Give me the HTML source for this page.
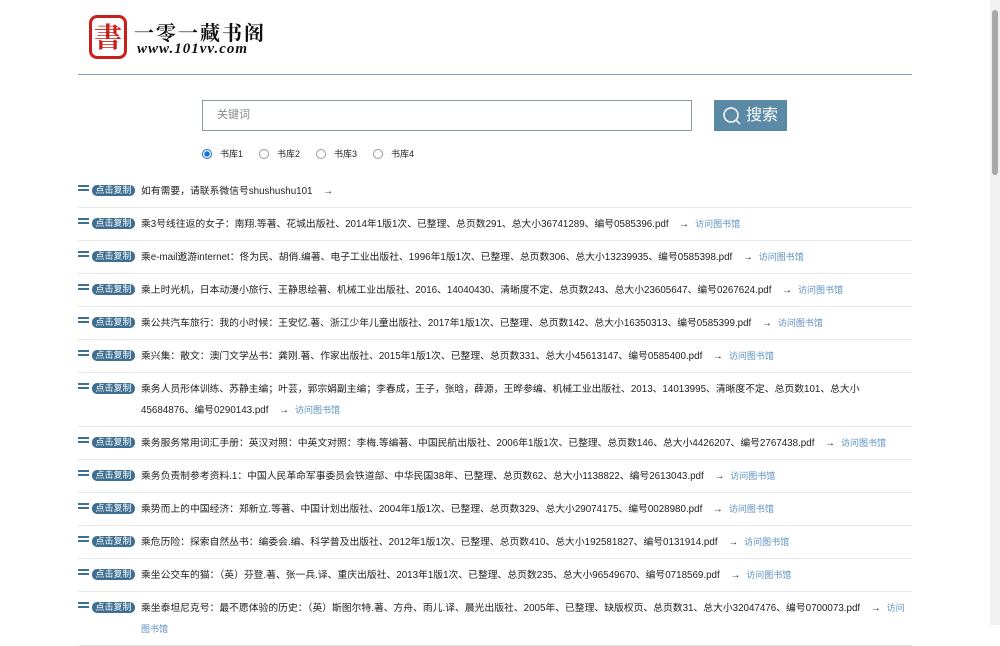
<!DOCTYPE html>
<html><head><meta charset="utf-8">
<style>
*{margin:0;padding:0;box-sizing:border-box}
body{width:1000px;height:625px;overflow:hidden;background:#fff;font-family:"Liberation Sans","Noto Sans CJK SC",sans-serif;color:#222;position:relative}
.logo{position:absolute;left:89px;top:15px;width:38px;height:44px;border:3px solid #c8201a;border-radius:8px;color:#c8201a;font:bold 28px "Noto Serif CJK SC",serif;text-align:center;line-height:36px}
.t1{position:absolute;left:134px;top:17px;font:bold 20px "Noto Serif CJK SC",serif;letter-spacing:2px;color:#111}
.t2{position:absolute;left:137px;top:41px;font:italic bold 15px "Liberation Serif",serif;letter-spacing:1px;color:#111}
.hr{position:absolute;left:78px;top:74px;width:834px;height:1px;background:#7fa3c4}
.inp{position:absolute;left:202px;top:100px;width:490px;height:31px;border:1px solid #8a9aa0;padding-left:14px;font-size:11px;color:#888;line-height:29px}
.btn{position:absolute;left:714px;top:100px;width:73px;height:31px;background:#5a8aa6;color:#fff;font-size:16px;line-height:31px;padding-left:32px}
.btn svg{position:absolute;left:8px;top:6px}
.radios{position:absolute;left:202px;top:147px;font-size:9px;display:flex;align-items:center}
.r{width:10px;height:10px;border:1px solid #999;border-radius:50%;margin-right:8px}
.r.on{border-color:#1a6fd6;background:radial-gradient(#1a6fd6 0 2.5px,#fff 3px)}
.radios span{margin-right:16px}
.list{position:absolute;left:78px;top:175px;width:834px}
.row{border-bottom:1px solid #e6e6e6;padding:6px 0 5px 63px;position:relative;font-size:9.8px;line-height:21px;min-height:33px}
.ic{position:absolute;left:0;top:10px;width:11px;height:9px}
.ic i{display:block;height:2px;background:#3d6f93;margin-bottom:1.5px}
.bd{position:absolute;left:14px;top:10px;width:43px;height:11px;background:#3e6f93;border-radius:5px;color:#fff;font-size:9px;line-height:11px;text-align:center}
.a{margin:0 6px 0 8px}
.v{color:#5b8fc0;font-size:9px}
.sb{position:absolute;right:0;top:0;width:10px;height:625px;background:#f1f1f1}
.th{position:absolute;right:2px;top:10px;width:6px;height:165px;background:#a8a8a8;border-radius:3px}
</style></head><body>
<div class="logo">書</div>
<div class="t1">一零一藏书阁</div>
<div class="t2">www.101vv.com</div>
<div class="hr"></div>
<div class="inp">关键词</div>
<div class="btn"><svg width="20" height="20" viewBox="0 0 20 20"><circle cx="9" cy="9" r="7" fill="none" stroke="#fff" stroke-width="1.5"/><line x1="14" y1="14" x2="18" y2="18" stroke="#fff" stroke-width="1.5"/></svg>搜索</div>
<div class="radios"><div class="r on"></div><span>书库1</span><div class="r"></div><span>书库2</span><div class="r"></div><span>书库3</span><div class="r"></div><span>书库4</span></div>
<div class="list">
<div class="row"><div class="ic"><i></i><i></i></div><div class="bd">点击复制</div>如有需要，请联系微信号shushushu101 <span class="a">→</span></div>
<div class="row"><div class="ic"><i></i><i></i></div><div class="bd">点击复制</div>乘3号线往返的女子：南翔.等著、花城出版社、2014年1版1次、已整理、总页数291、总大小36741289、编号0585396.pdf <span class="a">→</span><span class="v">访问图书馆</span></div>
<div class="row"><div class="ic"><i></i><i></i></div><div class="bd">点击复制</div>乘e-mail遨游internet：佟为民、胡俏.编著、电子工业出版社、1996年1版1次、已整理、总页数306、总大小13239935、编号0585398.pdf <span class="a">→</span><span class="v">访问图书馆</span></div>
<div class="row"><div class="ic"><i></i><i></i></div><div class="bd">点击复制</div>乘上时光机，日本动漫小旅行、王静思绘著、机械工业出版社、2016、14040430、清晰度不定、总页数243、总大小23605647、编号0267624.pdf <span class="a">→</span><span class="v">访问图书馆</span></div>
<div class="row"><div class="ic"><i></i><i></i></div><div class="bd">点击复制</div>乘公共汽车旅行：我的小时候：王安忆.著、浙江少年儿童出版社、2017年1版1次、已整理、总页数142、总大小16350313、编号0585399.pdf <span class="a">→</span><span class="v">访问图书馆</span></div>
<div class="row"><div class="ic"><i></i><i></i></div><div class="bd">点击复制</div>乘兴集：散文：澳门文学丛书：龚刚.著、作家出版社、2015年1版1次、已整理、总页数331、总大小45613147、编号0585400.pdf <span class="a">→</span><span class="v">访问图书馆</span></div>
<div class="row"><div class="ic"><i></i><i></i></div><div class="bd">点击复制</div>乘务人员形体训练、苏静主编；叶芸，郭宗娟副主编；李春成，王子，张晗，薛源，王晔参编、机械工业出版社、2013、14013995、清晰度不定、总页数101、总大小<br>45684876、编号0290143.pdf <span class="a">→</span><span class="v">访问图书馆</span></div>
<div class="row"><div class="ic"><i></i><i></i></div><div class="bd">点击复制</div>乘务服务常用词汇手册：英汉对照：中英文对照：李梅.等编著、中国民航出版社、2006年1版1次、已整理、总页数146、总大小4426207、编号2767438.pdf <span class="a">→</span><span class="v">访问图书馆</span></div>
<div class="row"><div class="ic"><i></i><i></i></div><div class="bd">点击复制</div>乘务负责制参考资料.1：中国人民革命军事委员会铁道部、中华民国38年、已整理、总页数62、总大小1138822、编号2613043.pdf <span class="a">→</span><span class="v">访问图书馆</span></div>
<div class="row"><div class="ic"><i></i><i></i></div><div class="bd">点击复制</div>乘势而上的中国经济：郑新立.等著、中国计划出版社、2004年1版1次、已整理、总页数329、总大小29074175、编号0028980.pdf <span class="a">→</span><span class="v">访问图书馆</span></div>
<div class="row"><div class="ic"><i></i><i></i></div><div class="bd">点击复制</div>乘危历险：探索自然丛书：编委会.编、科学普及出版社、2012年1版1次、已整理、总页数410、总大小192581827、编号0131914.pdf <span class="a">→</span><span class="v">访问图书馆</span></div>
<div class="row"><div class="ic"><i></i><i></i></div><div class="bd">点击复制</div>乘坐公交车的猫：（英）芬登.著、张一兵.译、重庆出版社、2013年1版1次、已整理、总页数235、总大小96549670、编号0718569.pdf <span class="a">→</span><span class="v">访问图书馆</span></div>
<div class="row"><div class="ic"><i></i><i></i></div><div class="bd">点击复制</div>乘坐泰坦尼克号：最不愿体验的历史：（英）斯图尔特.著、方舟、雨儿.译、晨光出版社、2005年、已整理、缺版权页、总页数31、总大小32047476、编号0700073.pdf <span class="a">→</span><span class="v">访问图书馆</span></div>
</div>
<div class="sb"><div class="th"></div></div>
</body></html>
